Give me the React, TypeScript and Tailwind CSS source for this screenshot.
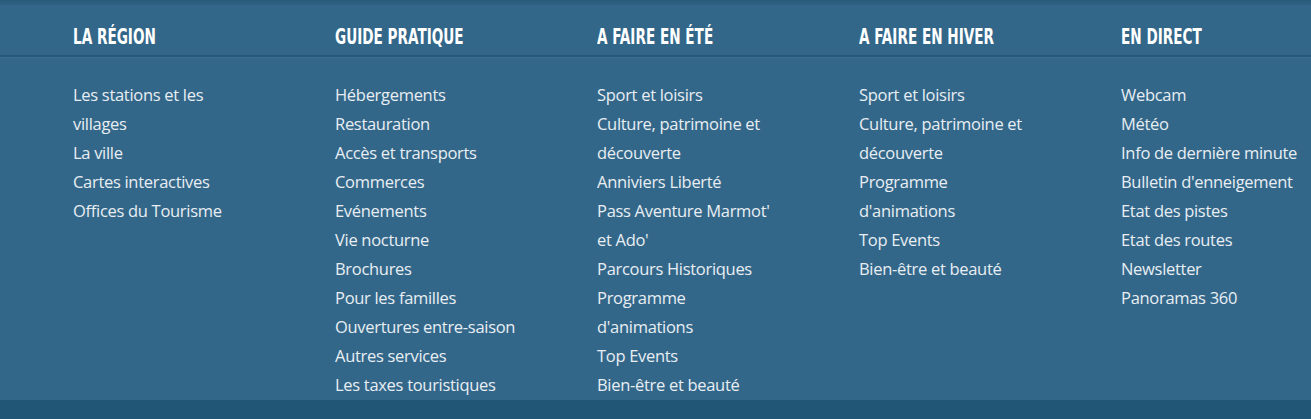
// Site footer: five link columns under a row of condensed headings.

type Link = string[];

const columns: { title: string; links: Link[] }[] = [
  {
    title: "LA RÉGION",
    links: [
      ["Les stations et les", "villages"],
      ["La ville"],
      ["Cartes interactives"],
      ["Offices du Tourisme"],
    ],
  },
  {
    title: "GUIDE PRATIQUE",
    links: [
      ["Hébergements"],
      ["Restauration"],
      ["Accès et transports"],
      ["Commerces"],
      ["Evénements"],
      ["Vie nocturne"],
      ["Brochures"],
      ["Pour les familles"],
      ["Ouvertures entre-saison"],
      ["Autres services"],
      ["Les taxes touristiques"],
    ],
  },
  {
    title: "A FAIRE EN ÉTÉ",
    links: [
      ["Sport et loisirs"],
      ["Culture, patrimoine et", "découverte"],
      ["Anniviers Liberté"],
      ["Pass Aventure Marmot'", "et Ado'"],
      ["Parcours Historiques"],
      ["Programme", "d'animations"],
      ["Top Events"],
      ["Bien-être et beauté"],
    ],
  },
  {
    title: "A FAIRE EN HIVER",
    links: [
      ["Sport et loisirs"],
      ["Culture, patrimoine et", "découverte"],
      ["Programme", "d'animations"],
      ["Top Events"],
      ["Bien-être et beauté"],
    ],
  },
  {
    title: "EN DIRECT",
    links: [
      ["Webcam"],
      ["Météo"],
      ["Info de dernière minute"],
      ["Bulletin d'enneigement"],
      ["Etat des pistes"],
      ["Etat des routes"],
      ["Newsletter"],
      ["Panoramas 360"],
    ],
  },
];

export default function App() {
  return (
    <div className="flex h-[419px] w-[1311px] flex-col overflow-hidden bg-[#336789] text-[#e8eef3]">
      <div className="h-[5px] bg-gradient-to-b from-[#285a7b] to-[#2f6284]" />

      {/* headings */}
      <div className="flex h-[50px] items-center pl-[73px] pt-[16px]">
        {columns.map((c) => (
          <div key={c.title} className="w-[262px] shrink-0">
            <span className="inline-block origin-left scale-x-[0.72] whitespace-nowrap font-['DejaVu_Sans_Condensed','DejaVu_Sans',sans-serif] text-[21px] font-bold leading-none text-white">
              {c.title}
            </span>
          </div>
        ))}
      </div>
      <div className="h-[2px] bg-[#275878]" />
      <div className="h-px bg-[#3a6f91]" />

      {/* link lists */}
      <div className="flex flex-1 pl-[73px] pt-[22px]">
        {columns.map((c) => (
          <ul
            key={c.title}
            className="w-[262px] shrink-0 whitespace-nowrap font-['Open_Sans',sans-serif] text-[16.5px] leading-[29px] tracking-[-0.3px]"
          >
            {c.links.map((lines, i) => (
              <li key={i}>
                {lines.map((l, j) => (
                  <div key={j}>{l}</div>
                ))}
              </li>
            ))}
          </ul>
        ))}
      </div>

      <div className="h-[19px] bg-[#215677]" />
    </div>
  );
}
